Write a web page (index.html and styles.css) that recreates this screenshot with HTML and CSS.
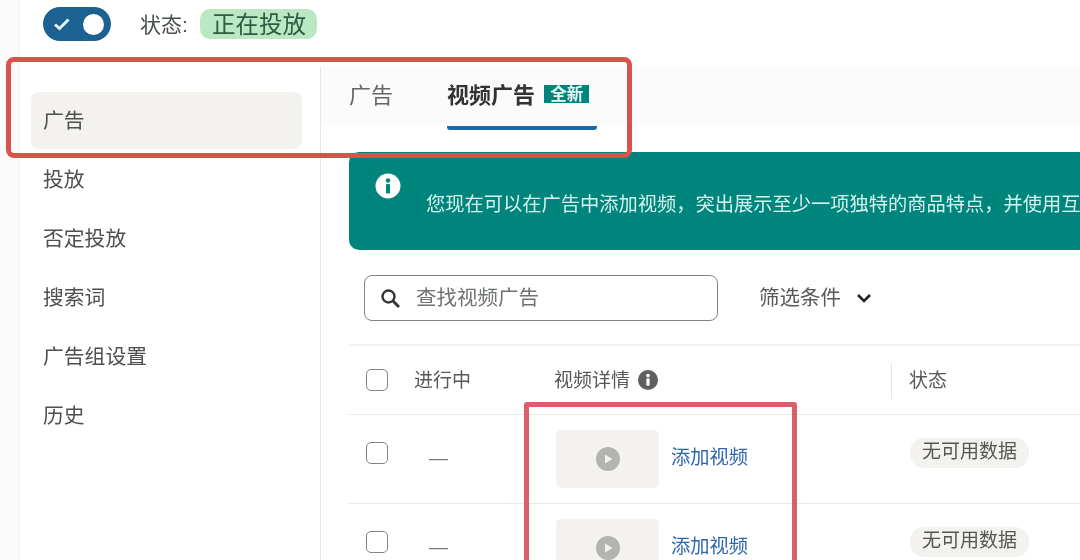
FILE: index.html
```html
<!DOCTYPE html>
<html lang="zh-CN">
<head>
<meta charset="UTF-8">
<meta name="viewport" content="width=device-width, initial-scale=1.0">
<title>视频广告</title>
<link rel="stylesheet" href="styles.css">
</head>
<body>

<div class="app">
  <div class="gutter"></div>

  <div class="main">
    <div class="topbar">
      <div class="toggle">
        <svg class="toggle-check" width="18" height="14" viewBox="0 0 18 14"><path d="M2 7.5l4.5 4L15.5 2.5" fill="none" stroke="#e6f2fa" stroke-width="3"/></svg>
        <span class="toggle-knob"></span>
      </div>
      <div class="status-label">状态:</div>
      <div class="status-pill">正在投放</div>
    </div>

    <div class="content">
      <div class="sidebar">
        <div class="nav-item active">广告</div>
        <div class="nav-item">投放</div>
        <div class="nav-item">否定投放</div>
        <div class="nav-item">搜索词</div>
        <div class="nav-item">广告组设置</div>
        <div class="nav-item">历史</div>
      </div>

      <div class="panel">
        <div class="tabs">
          <div class="tab">广告</div>
          <div class="tab selected">视频广告 <span class="tab-badge">全新</span></div>
        </div>

        <div class="banner">
          <svg class="banner-icon" width="26" height="26" viewBox="0 0 26 26"><circle cx="13" cy="13" r="12.5" fill="#fff"/><circle cx="13" cy="7.5" r="2.2" fill="#00857d"/><rect x="11" y="11" width="4" height="9.5" rx="1" fill="#00857d"/></svg>
          <div class="banner-text">您现在可以在广告中添加视频，突出展示至少一项独特的商品特点，并使用互动元素吸引买家</div>
        </div>

        <div class="search-row">
          <div class="search-box">
            <svg width="21" height="21" viewBox="0 0 21 21"><circle cx="8.5" cy="8.5" r="6" fill="none" stroke="#333" stroke-width="2.4"/><path d="M13 13l6 6" stroke="#333" stroke-width="2.8"/></svg>
            <span class="placeholder">查找视频广告</span>
          </div>
          <div class="filter"><span class="raised">筛选条件</span>
            <svg width="16" height="11" viewBox="0 0 16 11"><path d="M2 2l6 6 6-6" fill="none" stroke="#222" stroke-width="2.6"/></svg>
          </div>
        </div>

        <div class="table-row table-head">
          <div class="cell-check"><span class="checkbox"></span></div>
          <div class="raised">进行中</div>
          <div class="cell-details"><span class="raised">视频详情</span>
            <svg width="20" height="20" viewBox="0 0 20 20"><circle cx="10" cy="10" r="10" fill="#5f5f5f"/><circle cx="10" cy="5.6" r="1.8" fill="#fff"/><rect x="8.4" y="8.4" width="3.2" height="7.2" fill="#fff"/></svg>
          </div>
          <div class="cell-status"><span class="col-sep"></span><span class="raised">状态</span></div>
        </div>

        <div class="table-row">
          <div class="cell-check top"><span class="checkbox"></span></div>
          <div class="cell-dash"><span class="raised">—</span></div>
          <div class="cell-video">
            <div class="thumb">
              <svg width="24" height="24" viewBox="0 0 24 24"><circle cx="12" cy="12" r="12" fill="#b3b3b0"/><path d="M9 7.5l7.5 4.5L9 16.5z" fill="#f2f2ef"/></svg>
            </div>
            <a class="video-link">添加视频</a>
          </div>
          <div class="cell-pill"><span class="pill">无可用数据</span></div>
        </div>

        <div class="table-row">
          <div class="cell-check top"><span class="checkbox"></span></div>
          <div class="cell-dash"><span class="raised">—</span></div>
          <div class="cell-video">
            <div class="thumb">
              <svg width="24" height="24" viewBox="0 0 24 24"><circle cx="12" cy="12" r="12" fill="#b3b3b0"/><path d="M9 7.5l7.5 4.5L9 16.5z" fill="#f2f2ef"/></svg>
            </div>
            <a class="video-link">添加视频</a>
          </div>
          <div class="cell-pill"><span class="pill">无可用数据</span></div>
        </div>
      </div>
    </div>
  </div>

  <div class="mark mark-tabs"></div>
  <div class="mark mark-video"></div>
</div>

</body>
</html>
```

FILE: styles.css
```css
html, body {
  margin: 0;
  padding: 0;
  background: #fff;
}
.app {
  position: relative;
  display: flex;
  width: 1080px;
  height: 560px;
  overflow: hidden;
  background: #fff;
  color: #565959;
  font-family: "Liberation Sans", "Noto Sans CJK SC", sans-serif;
  font-size: 19px;
  filter: blur(0.6px);
}
.gutter {
  flex: none;
  width: 19px;
  background: #fafafa;
  border-right: 1px solid #f2f2f2;
}
.main {
  flex: 1;
  min-width: 0;
  display: flex;
  flex-direction: column;
}
.raised {
  display: block;
  margin-top: -4px;
}

/* top bar */
.topbar {
  flex: none;
  height: 60px;
  padding: 7px 0 0 23px;
  display: flex;
  align-items: flex-start;
}
.toggle {
  width: 68px;
  height: 34px;
  border-radius: 17px;
  background: #1b6192;
  display: flex;
  align-items: center;
  justify-content: space-between;
  padding: 0 7px 0 10px;
  box-sizing: border-box;
}
.toggle-knob {
  width: 21px;
  height: 21px;
  border-radius: 50%;
  background: #fff;
}
.status-label {
  margin-left: 29px;
  width: 60px;
  line-height: 36px;
  font-size: 21px;
  color: #4a4f4f;
}
.status-pill {
  margin-top: 2px;
  height: 30px;
  line-height: 32px;
  padding: 0 11px 0 12px;
  border-radius: 10px;
  background: #b9e8c3;
  color: #2f5a44;
  font-size: 23.5px;
}

/* sidebar */
.content {
  flex: 1;
  min-height: 0;
  display: flex;
}
.sidebar {
  flex: none;
  width: 301px;
  box-sizing: border-box;
  padding: 25px 18px 0 11px;
  border-right: 1px solid #e8e8e8;
}
.nav-item {
  height: 57px;
  line-height: 57px;
  margin-bottom: 2px;
  padding-left: 12px;
  border-radius: 8px;
  font-size: 20.8px;
  color: #4f4f4f;
}
.nav-item.active {
  background: #f3f2ee;
}

/* tabs */
.panel {
  flex: 1;
  min-width: 0;
  padding-left: 28px;
}
.tabs {
  height: 63px;
  display: flex;
  box-sizing: border-box;
  margin-left: -28px;
  padding-left: 28px;
  background: linear-gradient(#fbfbfb 0, #fbfbfb 58px, #fff 58px);
}
.tab {
  font-size: 22px;
  line-height: 58px;
  height: 63px;
  box-sizing: border-box;
  margin-right: 54px;
  color: #666;
}
.tab.selected {
  width: 150px;
  margin-right: 0;
  font-weight: bold;
  color: #333;
  border-bottom: 4px solid #1b6aa5;
  border-radius: 0 0 3px 3px;
  white-space: nowrap;
}
.tab-badge {
  display: inline-block;
  width: 45px;
  height: 18px;
  line-height: 18px;
  margin-left: 3px;
  text-align: center;
  vertical-align: 3px;
  background: #00857d;
  color: #e8fbf7;
  font-size: 16.5px;
}

/* banner */
.banner {
  position: relative;
  height: 98px;
  margin-top: 22px;
  box-sizing: border-box;
  padding: 21px 0 0 26px;
  border-radius: 10px 0 0 10px;
  background: #00857d;
  display: flex;
  overflow: hidden;
}
.banner-icon {
  flex: none;
}
.banner-text {
  margin: 21px 0 0 25px;
  line-height: 22px;
  font-size: 19.25px;
  color: #d6f2ee;
  white-space: nowrap;
}

/* search */
.search-row {
  margin-top: 23px;
  padding: 2px 0 23px 15px;
  display: flex;
  align-items: center;
  border-bottom: 2px solid #f1f1f1;
}
.search-box {
  width: 354px;
  height: 46px;
  box-sizing: border-box;
  padding-left: 15px;
  border: 1.5px solid #7f8484;
  border-radius: 8px;
  display: flex;
  align-items: center;
}
.placeholder {
  margin-left: 15px;
  margin-top: -4px;
  font-size: 20.5px;
  color: #6f7373;
}
.filter {
  margin-left: 41px;
  font-size: 20.5px;
  display: flex;
  align-items: center;
  gap: 15px;
}

/* table */
.table-row {
  height: 89px;
  box-sizing: border-box;
  display: grid;
  grid-template-columns: 65px 140px 337px 1fr;
  align-items: center;
  border-bottom: 1px solid #e8e8e8;
}
.table-head {
  height: 69px;
}
.cell-check {
  padding-left: 17px;
  display: flex;
}
.cell-check.top {
  align-self: start;
  padding-top: 27px;
}
.checkbox {
  width: 20px;
  height: 20px;
  border: 1.5px solid #7f8484;
  border-radius: 5px;
  background: #fff;
}
.cell-details {
  display: flex;
  align-items: center;
  gap: 8px;
}
.cell-status {
  position: relative;
  padding-left: 18px;
}
.col-sep {
  position: absolute;
  left: 0;
  top: -6px;
  height: 36px;
  border-left: 1px solid #e4e4e4;
}
.cell-dash {
  padding-left: 15px;
  color: #777;
  line-height: 26px;
  padding-top: 2px;
}
.cell-video {
  display: flex;
  align-items: center;
  padding-left: 2px;
}
.thumb {
  width: 103px;
  height: 58px;
  border-radius: 5px;
  background: #f3f2ee;
  display: flex;
  align-items: center;
  justify-content: center;
}
.video-link {
  margin: -7px 0 0 12px;
  font-size: 19.25px;
  color: #2f67ae;
}
.cell-pill {
  align-self: start;
  padding: 23px 0 0 19px;
}
.pill {
  display: inline-block;
  height: 30px;
  line-height: 28px;
  padding: 0 12px;
  border-radius: 14px;
  background: #f3f2ee;
  color: #555;
}

/* red annotation frames on top of the screenshot */
.mark {
  position: absolute;
  box-sizing: border-box;
  border: 5px solid #d9534c;
  border-radius: 8px;
}
.mark-tabs {
  left: 6px;
  top: 57px;
  width: 626px;
  height: 101px;
}
.mark-video {
  left: 524px;
  top: 402px;
  width: 273px;
  height: 190px;
  border-color: #d9606a;
  border-radius: 3px;
}
```
